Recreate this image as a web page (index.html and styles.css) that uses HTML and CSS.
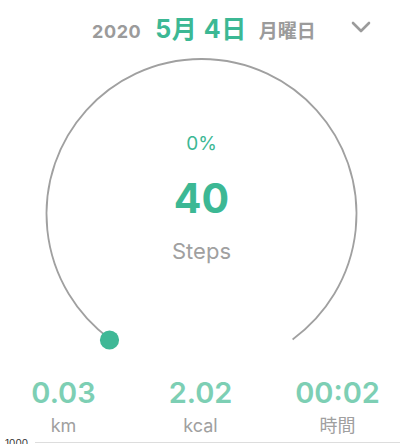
FILE: index.html
```html
<!DOCTYPE html>
<html lang="ja">
<head>
    <meta charset="UTF-8">
    <meta name="viewport" content="width=device-width, initial-scale=1.0">
    <title>歩数</title>
    <link rel="stylesheet" href="styles.css">
</head>
<body>
    <div class="page">
        <!-- 日付ヘッダー -->
        <div class="header">
            <div class="date">
                <span class="year">2020</span>
                <span class="day">5月 4日</span>
                <span class="weekday">月曜日</span>
            </div>
            <svg class="chevron" width="20" height="12" viewBox="0 0 20 12">
                <path d="M2 2 L10 10 L18 2" fill="none" stroke="#9b9b9b" stroke-width="2.6" stroke-linecap="round" stroke-linejoin="round"/>
            </svg>
        </div>

        <!-- 歩数メーター -->
        <div class="gauge">
            <svg class="ring" width="400" height="310" viewBox="0 0 400 310">
                <path d="M110.4 289.4 A155 155 0 1 1 292.6 289.4" fill="none" stroke="#a0a0a0" stroke-width="1.8"/>
                <circle cx="109.5" cy="290" r="9.6" fill="#3fb896"/>
            </svg>
            <div class="gauge-text">
                <div class="percent">0%</div>
                <div class="steps">40</div>
                <div class="steps-label">Steps</div>
            </div>
        </div>

        <!-- 距離・カロリー・時間 -->
        <div class="stats">
            <div class="stat">
                <div class="stat-value">0.03</div>
                <div class="stat-label">km</div>
            </div>
            <div class="stat">
                <div class="stat-value">2.02</div>
                <div class="stat-label">kcal</div>
            </div>
            <div class="stat">
                <div class="stat-value">00:02</div>
                <div class="stat-label">時間</div>
            </div>
        </div>

        <!-- グラフ軸 -->
        <div class="chart">
            <span class="axis-label">1000</span>
            <span class="axis-line"></span>
        </div>
    </div>
</body>
</html>
```

FILE: styles.css
```css
/* 全体 */
* {
    box-sizing: border-box;
    margin: 0;
    padding: 0;
}

body {
    background: #fff;
    font-family: Inter, "Noto Sans CJK JP", sans-serif;
    overflow: hidden;
}

.page {
    width: 400px;
    height: 444px;
    overflow: hidden;
}

/* ヘッダー */
.header {
    display: flex;
    align-items: center;
    justify-content: space-between;
    height: 50px;
    padding: 4px 29px 0 92px;
}

.date {
    display: flex;
    align-items: baseline;
}

.year {
    color: #9b9b9b;
    font-size: 18px;
    font-weight: 700;
    letter-spacing: 0.6px;
}

.day {
    color: #3cb894;
    font-size: 25px;
    font-weight: 700;
    margin-left: 14px;
    letter-spacing: 0.5px;
}

.weekday {
    color: #9b9b9b;
    font-size: 19px;
    font-weight: 600;
    margin-left: 12px;
}

/* メーター */
.gauge {
    display: grid;
    height: 310px;
}

.ring,
.gauge-text {
    grid-area: 1 / 1;
}

.ring {
    display: block;
}

.gauge-text {
    display: flex;
    flex-direction: column;
    align-items: center;
    padding-top: 82px;
    padding-left: 3px;
}

.percent {
    color: #3cb894;
    font-size: 19px;
    line-height: 24px;
}

.steps {
    color: #3cb894;
    font-size: 41px;
    font-weight: 700;
    line-height: 46px;
    margin-top: 19px;
}

.steps-label {
    color: #a0a0a0;
    font-size: 22px;
    line-height: 26px;
    margin-top: 17px;
}

/* 統計 */
.stats {
    display: grid;
    grid-template-columns: repeat(3, 137px);
    justify-content: center;
    padding-top: 16px;
    padding-left: 1px;
}

.stat {
    display: flex;
    flex-direction: column;
    align-items: center;
}

.stat-value {
    color: #7dcfb4;
    font-size: 29px;
    font-weight: 600;
    line-height: 34px;
}

.stat-label {
    color: #a0a0a0;
    font-size: 18px;
    line-height: 24px;
    margin-top: 4px;
}

/* グラフ */
.chart {
    display: flex;
    align-items: flex-start;
    padding-left: 5px;
    margin-top: 0;
}

.axis-label {
    color: #333;
    font-size: 10px;
    line-height: 10px;
}

.axis-line {
    flex: 1;
    height: 1px;
    background: #ddd;
    margin-left: 7px;
    margin-top: 4px;
}
```
